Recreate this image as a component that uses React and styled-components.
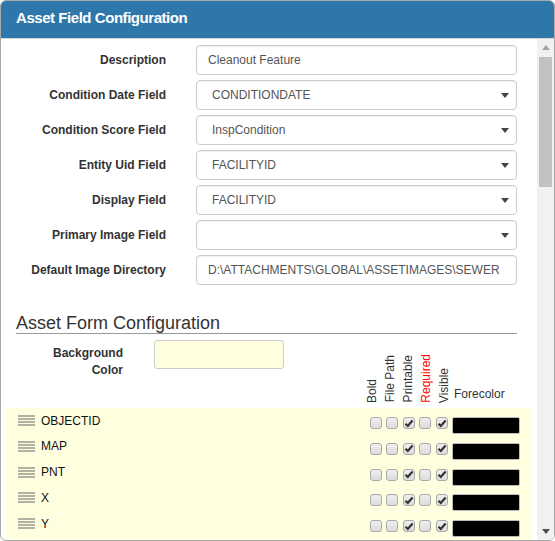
import styled, { createGlobalStyle } from "styled-components";

const GlobalStyle = createGlobalStyle`
    body {
        margin: 0;
        font-family: "Liberation Sans", Arial, sans-serif;
        background: #fff;
    }
`;

const formFields = [
    { label: "Description", value: "Cleanout Feature" },
    { label: "Condition Date Field", value: "CONDITIONDATE", select: true },
    { label: "Condition Score Field", value: "InspCondition", select: true },
    { label: "Entity Uid Field", value: "FACILITYID", select: true },
    { label: "Display Field", value: "FACILITYID", select: true },
    { label: "Primary Image Field", value: "", select: true },
    { label: "Default Image Directory", value: "D:\\ATTACHMENTS\\GLOBAL\\ASSETIMAGES\\SEWER" },
];

const columns = [
    { name: "Bold" },
    { name: "File Path" },
    { name: "Printable" },
    { name: "Required", required: true },
    { name: "Visible" },
];

const assetFields = ["OBJECTID", "MAP", "PNT", "X", "Y"];
const defaultChecks = [false, false, true, false, true];

function Arrow({ up, color }) {
    return (
        <svg width="8" height="5" viewBox="0 0 8 5">
            <path d={up ? "M0 5 L4 0 L8 5 Z" : "M0 0 L8 0 L4 5 Z"} fill={color} />
        </svg>
    );
}

function DragHandle() {
    return (
        <svg width="17" height="11" viewBox="0 0 17 11">
            {[1, 4, 7, 10].map((y) => (
                <rect key={y} x="0" y={y - 0.5} width="17" height="1" fill="#666" />
            ))}
        </svg>
    );
}

function CheckBox({ checked }) {
    return (
        <Box>
            {checked && (
                <svg width="10" height="9" viewBox="0 0 10 9">
                    <path d="M1.5 4.8 L3.8 7 L8.6 1.6" stroke="#333" strokeWidth="2.2" fill="none" />
                </svg>
            )}
        </Box>
    );
}

export default function App() {
    return (
        <>
            <GlobalStyle />
            <Panel>
                <Header>Asset Field Configuration</Header>
                <Body>
                    <Content>
                        {formFields.map((f) => (
                            <FormRow key={f.label}>
                                <Label>{f.label}</Label>
                                {f.select ? (
                                    <Select>
                                        <span>{f.value}</span>
                                        <Arrow color="#444" />
                                    </Select>
                                ) : (
                                    <Input>{f.value}</Input>
                                )}
                            </FormRow>
                        ))}

                        <SectionTitle>Asset Form Configuration</SectionTitle>

                        <ConfigRow>
                            <BackgroundGroup>
                                <ColorLabel>Background Color</ColorLabel>
                                <ColorInput />
                            </BackgroundGroup>
                            <ColumnHeads>
                                {columns.map((c) => (
                                    <RotatedHead key={c.name} $required={c.required}>
                                        {c.name}
                                    </RotatedHead>
                                ))}
                                <ForecolorHead>Forecolor</ForecolorHead>
                            </ColumnHeads>
                        </ConfigRow>

                        <FieldList>
                            {assetFields.map((name) => (
                                <FieldRow key={name}>
                                    <DragHandle />
                                    <FieldName>{name}</FieldName>
                                    <Checks>
                                        {defaultChecks.map((c, i) => (
                                            <CheckCell key={i}>
                                                <CheckBox checked={c} />
                                            </CheckCell>
                                        ))}
                                    </Checks>
                                    <Swatch />
                                </FieldRow>
                            ))}
                        </FieldList>
                    </Content>
                    <ScrollTrack>
                        <ScrollButton>
                            <Arrow up color="#a3a3a3" />
                        </ScrollButton>
                        <Thumb />
                        <ScrollButton $bottom>
                            <Arrow color="#505050" />
                        </ScrollButton>
                    </ScrollTrack>
                </Body>
            </Panel>
        </>
    );
}

const Panel = styled.div`
    width: 555px;
    height: 541px;
    box-sizing: border-box;
    border: 1px solid #a8a8a8;
    border-radius: 6px;
    overflow: hidden;
    display: flex;
    flex-direction: column;
    background: #fff;
`

const Header = styled.div`
    height: 38px;
    box-sizing: border-box;
    flex-shrink: 0;
    background-color: #2e77ab;
    border-bottom: 1px solid #d6d6d6;
    color: #fff;
    font-size: 15px;
    font-weight: bold;
    letter-spacing: -0.45px;
    padding: 0 0 5px 15px;
    display: flex;
    align-items: center;
`

const Body = styled.div`
    flex: 1;
    display: flex;
    min-height: 0;
`

const Content = styled.div`
    flex: 1;
    overflow: hidden;
    padding-top: 6px;
`

const FormRow = styled.div`
    display: grid;
    grid-template-columns: 150px 321px;
    column-gap: 30px;
    align-items: center;
    padding-left: 15px;
    height: 30px;
    margin-bottom: 5px;
`

const Label = styled.div`
    text-align: right;
    font-size: 12px;
    font-weight: bold;
    color: #333;
`

const Input = styled.div`
    height: 30px;
    box-sizing: border-box;
    border: 1px solid #ccc;
    border-radius: 4px;
    box-shadow: inset 0 1px 1px rgba(0, 0, 0, 0.06);
    padding: 0 10px 0 11px;
    display: flex;
    align-items: center;
    font-size: 12px;
    color: #555;
    white-space: nowrap;
    overflow: hidden;
`

const Select = styled(Input)`
    justify-content: space-between;
    padding: 0 7px 0 15px;
`

const SectionTitle = styled.div`
    margin: 29px 20px 0 15px;
    font-size: 18px;
    line-height: 19px;
    color: #333;
    border-bottom: 1px solid #999;
`

const ConfigRow = styled.div`
    display: flex;
    align-items: flex-start;
    padding-left: 15px;
    margin-top: 6px;
`

const BackgroundGroup = styled.div`
    display: grid;
    grid-template-columns: 107px 130px;
    column-gap: 31px;
`

const ColorLabel = styled(Label)`
    padding: 5px 0 0 30px;
    line-height: 17px;
`

const ColorInput = styled.div`
    height: 29px;
    box-sizing: border-box;
    border: 1px solid #ccc;
    border-radius: 3px;
    background: #ffffe0;
`

const ColumnHeads = styled.div`
    display: flex;
    align-items: flex-end;
    margin: 14px 0 0 79px;
`

const RotatedHead = styled.div`
    writing-mode: vertical-rl;
    transform: rotate(180deg);
    width: 18px;
    line-height: 18px;
    font-size: 12px;
    color: ${(p) => (p.$required ? "#ff0000" : "#333")};
`

const ForecolorHead = styled.div`
    font-size: 12px;
    line-height: 14px;
    color: #333;
    margin: 0 0 2px 1px;
`

const FieldList = styled.div`
    margin: 5px 5px 0 5px;
    background: #ffffe0;
    padding: 0 12px 6px 12px;
`

const FieldRow = styled.div`
    height: 25.75px;
    display: flex;
    align-items: center;
    gap: 6px;
`

const FieldName = styled.div`
    flex: 1;
    font-size: 12px;
    color: #111;
`

const Checks = styled.div`
    display: flex;
    margin-top: 5px;
`

const CheckCell = styled.div`
    width: 16.5px;
`

const Box = styled.div`
    width: 12px;
    height: 12px;
    box-sizing: border-box;
    border: 1px solid #a9a9a9;
    border-radius: 3px;
    background: linear-gradient(#eeeeee, #dcdcdc);
    display: flex;
    align-items: center;
    justify-content: center;
`

const Swatch = styled.div`
    width: 68px;
    height: 17px;
    box-sizing: border-box;
    background: #000;
    border: 1px solid #bbb;
    border-radius: 2px;
    margin-top: 10px;
    margin-left: -6px;
`

const ScrollTrack = styled.div`
    width: 17px;
    flex-shrink: 0;
    background: #f1f1f1;
    display: flex;
    flex-direction: column;
`

const ScrollButton = styled.div`
    height: 17px;
    display: flex;
    align-items: center;
    justify-content: center;
    margin-top: ${(p) => (p.$bottom ? "auto" : "0")};
`

const Thumb = styled.div`
    height: 130px;
    margin: 1px 2px 0 2px;
    background: #c1c1c1;
`
